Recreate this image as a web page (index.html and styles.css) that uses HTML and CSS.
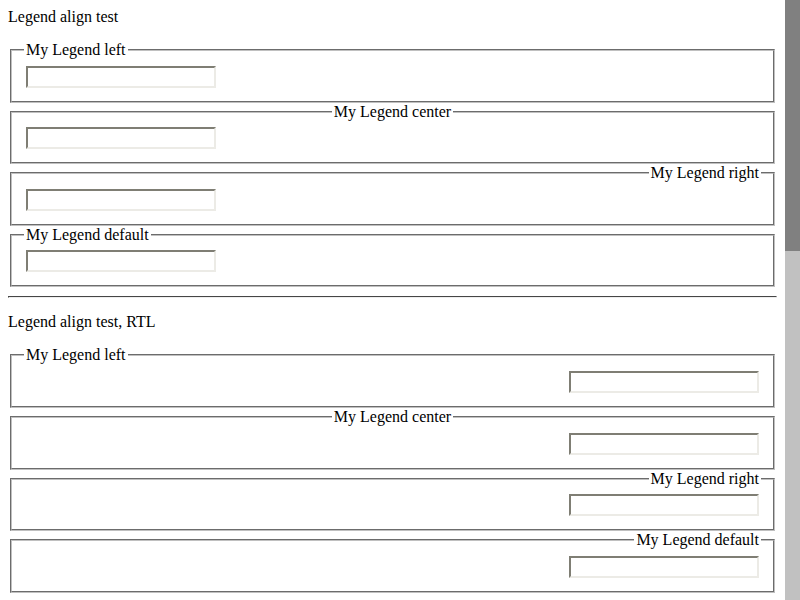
FILE: index.html
```html
<!DOCTYPE html>
<html lang="en">
<head>
  <meta charset="UTF-8">
  <title>Legend align test</title>
  <link rel="stylesheet" href="styles.css">
</head>
<body>
  <p class="title">Legend align test</p>
  <div class="group">
    <fieldset class="box"><legend class="legend-left">My Legend left</legend><input class="field" type="text"></fieldset>
    <fieldset class="box"><legend class="legend-center">My Legend center</legend><input class="field" type="text"></fieldset>
    <fieldset class="box"><legend class="legend-right">My Legend right</legend><input class="field" type="text"></fieldset>
    <fieldset class="box"><legend>My Legend default</legend><input class="field" type="text"></fieldset>
  </div>

  <hr class="sep">

  <p class="title">Legend align test, RTL</p>
  <div class="group" dir="rtl">
    <fieldset class="box"><legend class="legend-left">My Legend left</legend><input class="field" type="text"></fieldset>
    <fieldset class="box"><legend class="legend-center">My Legend center</legend><input class="field" type="text"></fieldset>
    <fieldset class="box"><legend class="legend-right">My Legend right</legend><input class="field" type="text"></fieldset>
    <fieldset class="box"><legend>My Legend default</legend><input class="field" type="text"></fieldset>
  </div>

  <!-- barre de defilement -->
  <div class="scrollbar"><div class="thumb"></div></div>
</body>
</html>
```

FILE: styles.css
```css
html {
  overflow: hidden;
}

body {
  margin: 8px 23px 8px 8px;
  font-family: 'Liberation Serif', serif;
  font-size: 16px;
  color: #000;
}

.title {
  margin: 15px 0;
}

.title:first-child {
  margin-top: 0;
}

.sep {
  margin: 9px 0 8px;
  border: 1px inset #eee;
  border-top-color: #9a9a9a;
  border-left-color: #9a9a9a;
}

.box {
  margin: 0 2px;
  padding: 5.6px 12px 10px;
  border: 2px groove #c0c0c0;
  min-width: 0;
}

.box legend {
  padding: 0 2px;
}

.field {
  display: block;
  box-sizing: border-box;
  width: 190px;
  height: 22px;
  margin: 1px 2px 3px;
  padding: 1px;
  border: 2px solid;
  border-color: #7f7e74 #ecebe6 #ecebe6 #7f7e74;
  background: #fff;
}

/* alignement des legendes */
.legend-left {
  margin-left: 0;
  margin-right: auto;
}

.legend-center {
  margin-left: auto;
  margin-right: auto;
}

.legend-right {
  margin-left: auto;
  margin-right: 0;
}

.scrollbar {
  position: fixed;
  top: 0;
  right: 0;
  width: 15px;
  height: 100%;
  background: #c1c1c1;
}

.thumb {
  height: 251px;
  background: #808080;
}
```
